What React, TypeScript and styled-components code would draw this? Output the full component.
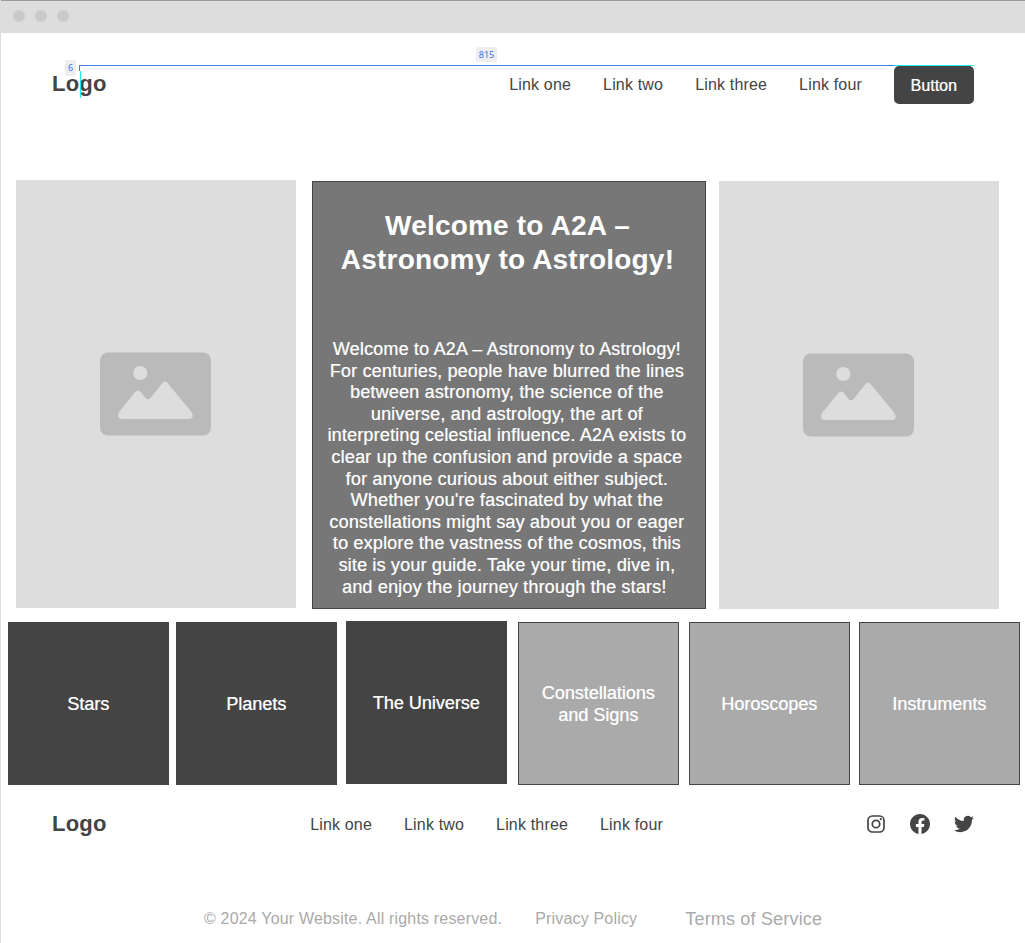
import React from 'react';
import styled, { createGlobalStyle } from 'styled-components';

const GlobalStyle = createGlobalStyle`
  * { box-sizing: border-box; }
  body {
    margin: 0;
    background: #fff;
    color: #444;
    font-family: "Liberation Sans", Arial, sans-serif;
    font-size: 16px;
  }
`;

const Frame = styled.div`
  position: relative;
  width: 1025px;
  height: 943px;
  overflow: hidden;
  display: flex;
  flex-direction: column;
  border-left: 1px solid #ddd;
  background: #fff;
`;

const TitleBar = styled.div`
  flex: none;
  display: flex;
  gap: 10px;
  height: 33px;
  margin-left: -1px;
  padding: 9px 0 0 13px;
  background: #ddd;
  border-top: 1px solid #999;
`;

const WindowDot = styled.span`
  width: 12px;
  height: 12px;
  border-radius: 50%;
  background: #cacaca;
`;

const Header = styled.header`
  flex: none;
  display: flex;
  align-items: center;
  justify-content: space-between;
  height: 38px;
  margin: 33px 51px 0;
`;

const Logo = styled.div<{ $lift?: number }>`
  margin-bottom: ${({ $lift = 0 }) => $lift}px;
  font-size: 22px;
  font-weight: 700;
  line-height: 26px;
  letter-spacing: 0.2px;
`;

const Nav = styled.nav`
  display: flex;
  align-items: center;
  gap: 32px;
  letter-spacing: 0.17px;
  line-height: 20px;
`;

const NavLink = styled.a`
  color: #444;
  white-space: nowrap;
`;

const NavButton = styled.button`
  width: 80px;
  height: 38px;
  padding: 2px 0 0;
  border: 0;
  border-radius: 5px;
  background: #444;
  color: #fff;
  font: 16px "Liberation Sans", Arial, sans-serif;
  text-shadow: -0.5px 0 0 rgba(255, 255, 255, 0.6);
`;

const Hero = styled.section`
  flex: none;
  display: flex;
  align-items: flex-start;
  margin: 76px 0 0 15px;
`;

const ImagePanel = styled.div<{ $top?: number }>`
  display: flex;
  align-items: center;
  justify-content: center;
  width: 280px;
  height: 428px;
  margin-top: ${({ $top = 0 }) => $top}px;
  padding-right: 1px;
  background: #ddd;
`;

const Intro = styled.article`
  width: 394px;
  height: 428px;
  margin: 1px 13px 0 16px;
  padding: 27px 4px 0 0;
  border: 1px solid #444;
  background: #777;
  color: #fff;
  text-align: center;
  white-space: nowrap;
`;

const IntroTitle = styled.h1`
  margin: 0 0 62px;
  padding-left: 1px;
  font-size: 28px;
  line-height: 34px;
  letter-spacing: 0.2px;
`;

const IntroText = styled.p`
  margin: 0;
  font-size: 18px;
  line-height: 21.6px;
  letter-spacing: 0.18px;
  text-shadow: -0.5px 0 0 rgba(255, 255, 255, 0.5);
`;

const Tiles = styled.section`
  flex: none;
  display: flex;
  align-items: flex-start;
  height: 164px;
  margin: 12px 0 0 7px;
`;

const Tile = styled.div<{ $tone: 'dark' | 'light'; $gap?: number; $raised?: boolean }>`
  flex: none;
  display: flex;
  align-items: center;
  justify-content: center;
  width: 161px;
  height: 163px;
  margin: ${({ $raised }) => ($raised ? 0 : 1)}px 0 0 ${({ $gap = 0 }) => $gap}px;
  border: 1px solid #444;
  background: ${({ $tone }) => ($tone === 'dark' ? '#444' : '#aaa')};
  color: #fff;
  font-size: 18px;
  line-height: 22px;
  text-align: center;
  text-shadow: -0.5px 0 0 rgba(255, 255, 255, 0.6);
`;

const Footer = styled.footer`
  flex: none;
  display: flex;
  align-items: center;
  height: 26px;
  margin: 26px 51px 0;
`;

const FooterNav = styled(Nav)`
  margin: 2px auto 0 203.6px;
`;

const Social = styled.div`
  display: flex;
  gap: 24px;
  height: 20px;
  svg { display: block; width: 20px; height: 20px; fill: #444; }
`;

const Legal = styled.div`
  flex: none;
  display: flex;
  align-items: center;
  height: 22px;
  margin: 71px 0 0 203px;
  color: #aaa;
  letter-spacing: 0.18px;
  white-space: nowrap;
`;

const LegalLink = styled.a<{ $large?: boolean; $gap: number }>`
  margin-left: ${({ $gap }) => $gap}px;
  font-size: ${({ $large }) => ($large ? 18 : 16)}px;
  letter-spacing: 0.18px;
`;

const GuideLine = styled.div`
  position: absolute;
  top: 65px;
  left: 78px;
  width: 815px;
  height: 6px;
  border: solid #4a80e0;
  border-width: 1px 0 0 1px;
`;

const EdgeLine = styled.div<{ $vertical?: boolean }>`
  position: absolute;
  top: ${({ $vertical }) => ($vertical ? 71 : 65)}px;
  left: ${({ $vertical }) => ($vertical ? 79 : 893)}px;
  width: ${({ $vertical }) => ($vertical ? 1 : 80)}px;
  height: ${({ $vertical }) => ($vertical ? 27 : 1)}px;
  background: #18f0f0;
`;

const Measure = styled.span<{ $x: number; $y: number; $w: number; $h: number }>`
  position: absolute;
  left: ${({ $x }) => $x}px;
  top: ${({ $y }) => $y}px;
  width: ${({ $w }) => $w}px;
  height: ${({ $h }) => $h}px;
  border-radius: 2px;
  background: #eee;
  color: #3b74f0;
  font: 9px/16px "Noto Sans", sans-serif;
  text-align: center;
`;

const PictureIcon = () => (
  <svg width="111" height="84" viewBox="0 0 111 84">
    <rect y="0.4" width="111" height="83.2" rx="8" fill="#bababa" />
    <circle cx="40.3" cy="21" r="7.1" fill="#ddd" />
    <path
      d="M19 60 L35 40.2 Q38 37 41 40.2 L45.5 46 Q48 48.7 50.5 46 L62.5 31 Q65 28 67.5 31 L91.5 60 Q95 66.8 89 67 H22 Q16 66.5 19 60Z"
      fill="#ddd"
    />
  </svg>
);

const InstagramIcon = () => (
  <svg viewBox="0 0 20 20">
    <rect x="2" y="2" width="16" height="16" rx="4.3" fill="none" stroke="#444" strokeWidth="1.7" />
    <circle cx="10" cy="10" r="3.7" fill="none" stroke="#444" strokeWidth="1.7" />
    <circle cx="14.8" cy="5.2" r="1.1" />
  </svg>
);

const FacebookIcon = () => (
  <svg viewBox="0 0 24 24">
    <path d="M24 12.073C24 5.446 18.627.073 12 .073S0 5.446 0 12.073c0 5.99 4.388 10.954 10.125 11.854v-8.385H7.078v-3.47h3.047V9.43c0-3.007 1.792-4.669 4.533-4.669 1.312 0 2.686.235 2.686.235v2.953H15.83c-1.491 0-1.956.925-1.956 1.874v2.25h3.328l-.532 3.47h-2.796v8.385C19.612 23.027 24 18.062 24 12.073z" />
  </svg>
);

const TwitterIcon = () => (
  <svg viewBox="0 0 24 24">
    <path d="M23.953 4.57a10 10 0 01-2.825.775 4.958 4.958 0 002.163-2.723c-.951.555-2.005.959-3.127 1.184a4.92 4.92 0 00-8.384 4.482C7.69 8.095 4.067 6.13 1.64 3.162a4.822 4.822 0 00-.666 2.475c0 1.71.87 3.213 2.188 4.096a4.904 4.904 0 01-2.228-.616v.06a4.923 4.923 0 003.946 4.827 4.996 4.996 0 01-2.212.085 4.936 4.936 0 004.604 3.417 9.867 9.867 0 01-6.102 2.105c-.39 0-.779-.023-1.17-.067a13.995 13.995 0 007.557 2.209c9.053 0 13.998-7.496 13.998-13.985 0-.21 0-.42-.015-.63A9.935 9.935 0 0024 4.59z" />
  </svg>
);

const links = ['Link one', 'Link two', 'Link three', 'Link four'];

const introLines = [
  'Welcome to A2A – Astronomy to Astrology!',
  'For centuries, people have blurred the lines',
  'between astronomy, the science of the',
  'universe, and astrology, the art of',
  'interpreting celestial influence. A2A exists to',
  'clear up the confusion and provide a space',
  'for anyone curious about either subject.',
  "Whether you're fascinated by what the",
  'constellations might say about you or eager',
  'to explore the vastness of the cosmos, this',
  'site is your guide. Take your time, dive in,',
  'and enjoy the journey through the stars!\u00a0',
];

export default function App() {
  return (
    <Frame>
      <GlobalStyle />
      <TitleBar>
        <WindowDot />
        <WindowDot />
        <WindowDot />
      </TitleBar>

      <Header>
        <Logo $lift={2}>Logo</Logo>
        <Nav>
          {links.map((l) => <NavLink key={l}>{l}</NavLink>)}
          <NavButton>Button</NavButton>
        </Nav>
      </Header>

      <Hero>
        <ImagePanel><PictureIcon /></ImagePanel>
        <Intro>
          <IntroTitle>Welcome to A2A –<br />Astronomy to Astrology!</IntroTitle>
          <IntroText>
            {introLines.map((line) => (
              <React.Fragment key={line}>{line}<br /></React.Fragment>
            ))}
          </IntroText>
        </Intro>
        <ImagePanel $top={1}><PictureIcon /></ImagePanel>
      </Hero>

      <Tiles>
        <Tile $tone="dark">Stars</Tile>
        <Tile $tone="dark" $gap={7}>Planets</Tile>
        <Tile $tone="dark" $gap={9} $raised>The Universe</Tile>
        <Tile $tone="light" $gap={11}>Constellations<br />and Signs</Tile>
        <Tile $tone="light" $gap={10}>Horoscopes</Tile>
        <Tile $tone="light" $gap={9}>Instruments</Tile>
      </Tiles>

      <Footer>
        <Logo>Logo</Logo>
        <FooterNav>
          {links.map((l) => <NavLink key={l}>{l}</NavLink>)}
        </FooterNav>
        <Social>
          <InstagramIcon />
          <FacebookIcon />
          <TwitterIcon />
        </Social>
      </Footer>

      <Legal>
        <span>© 2024 Your Website. All rights reserved.</span>
        <LegalLink $gap={33}>Privacy Policy</LegalLink>
        <LegalLink $gap={48} $large>Terms of Service</LegalLink>
      </Legal>

      <GuideLine />
      <EdgeLine />
      <EdgeLine $vertical />
      <Measure $x={64} $y={60} $w={11} $h={16}>6</Measure>
      <Measure $x={475} $y={47} $w={21} $h={15}>815</Measure>
    </Frame>
  );
}
